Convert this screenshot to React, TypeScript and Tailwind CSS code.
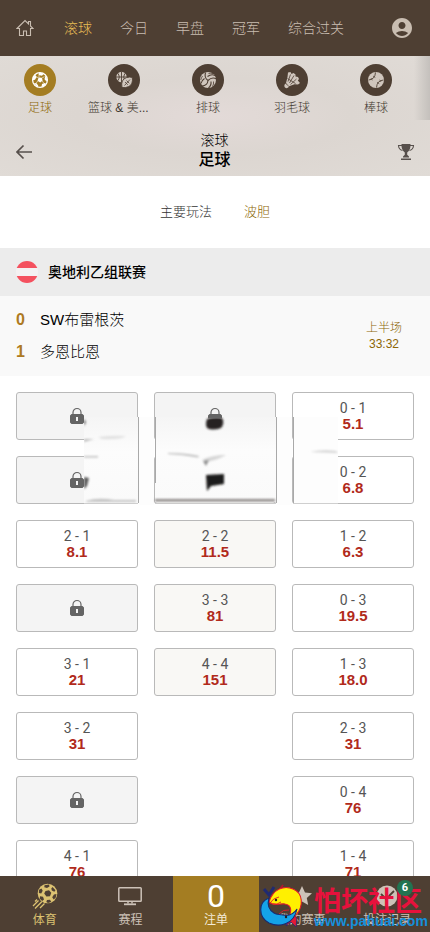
import type { ReactNode } from "react"
import { MdAccountCircle } from "react-icons/md"

type Odd = { score: string; price?: string }

const topTabs = ["滚球", "今日", "早盘", "冠军", "综合过关"]

const sports: { name: string; icon: ReactNode }[] = [
  { name: "足球", icon: <SoccerIcon /> },
  { name: "篮球 & 美...", icon: <BasketballIcon /> },
  { name: "排球", icon: <VolleyballIcon /> },
  { name: "羽毛球", icon: <ShuttlecockIcon /> },
  { name: "棒球", icon: <BaseballIcon /> },
]

const home: Odd[] = [
  { score: "1 - 0" },
  { score: "2 - 0" },
  { score: "2 - 1", price: "8.1" },
  { score: "3 - 0" },
  { score: "3 - 1", price: "21" },
  { score: "3 - 2", price: "31" },
  { score: "4 - 0" },
  { score: "4 - 1", price: "76" },
]

const draw: Odd[] = [
  { score: "0 - 0" },
  { score: "1 - 1" },
  { score: "2 - 2", price: "11.5" },
  { score: "3 - 3", price: "81" },
  { score: "4 - 4", price: "151" },
]

const away: Odd[] = [
  { score: "0 - 1", price: "5.1" },
  { score: "0 - 2", price: "6.8" },
  { score: "1 - 2", price: "6.3" },
  { score: "0 - 3", price: "19.5" },
  { score: "1 - 3", price: "18.0" },
  { score: "2 - 3", price: "31" },
  { score: "0 - 4", price: "76" },
  { score: "1 - 4", price: "71" },
]

function HomeIcon() {
  return (
    <svg viewBox="0 0 18 18" className="size-[18px]" fill="none" stroke="currentColor" strokeWidth="1.1">
      <path d="M1 9.5 9 1.5l3.5 3.5V2.5h2V7L17 9.5h-2.5v7h-4v-4.5h-3v4.5h-4v-7z" />
    </svg>
  )
}

function SoccerIcon() {
  return (
    <svg viewBox="0 0 18 18" className="size-[18px]">
      <circle cx="9" cy="9" r="7.4" fill="none" stroke="currentColor" strokeWidth="1.3" />
      <g fill="currentColor">
        <path d="m7.600 6.500 3.200.2.900 2.900-2.500 2-2.700-1.800zM8 1.500l5 1-2 2.300-3.300-.8zM2 6.500l2.300-2.700L5.600 6 4 8.800l-2.500.5zM14.300 4.500l2 4-.8 2-2-2.300zM2.800 12l2.700.3 1.700 2.200-.5 1.700zM11 13l2.700-1 1.300.7-2.500 2.800-2 .5z" />
      </g>
      <path d="m8 6.500 0-3M11 7l2.500-1.500M11.300 10l1.300 2M6.700 10 5 12.500M7.400 6.700 5 5.800" stroke="currentColor" strokeWidth="0.6" />
    </svg>
  )
}

function BasketballIcon() {
  return (
    <svg viewBox="0 0 18 18" className="size-[18px]">
      <circle cx="6.500" cy="6" r="5.200" fill="currentColor" />
      <path d="M1 6h11M6.500.5v11M2.500 2q3.500 4 0 8M10.500 2q-3.500 4 0 8" fill="none" stroke="#4e3f33" strokeWidth="0.9" />
      <path
        d="M7 16.500Q5.500 8.500 11.500 6.600q3-.9 5.800-.2 1 7-3.600 9.200-3 1.500-6.700.9z"
        fill="currentColor"
        stroke="#4e3f33"
        strokeWidth="0.9"
      />
      <path d="m9.500 14.500 5.500-6M10 11l2.800 2.800M11.500 9.500l2.800 2.800" stroke="#4e3f33" strokeWidth="0.8" />
    </svg>
  )
}

function VolleyballIcon() {
  return (
    <svg viewBox="0 0 18 18" className="size-[18px]">
      <circle cx="9" cy="9" r="8" fill="currentColor" />
      <g fill="none" stroke="#4e3f33" strokeWidth="1.100">
        <path d="M9 9.500Q5 7 6.500 1.500M9 9.500q4-4 8.500-1.500M9 9.500q-.5 5-6 5.500" />
        <path d="M8.500 5.500q4-3 7.500-1M12 10.500q.5 4-2.500 6.500M5.500 7.500q-3 2-3.500 5" />
        <path d="M9.500 2.500q2.500-.8 4.500.2M14.500 10.500q.5 2.500-1 5M3.500 5q-1 1.500-1.800 4" strokeWidth="0.8" />
      </g>
    </svg>
  )
}

function ShuttlecockIcon() {
  return (
    <svg viewBox="0 0 18 18" className="size-[18px]">
      <path
        d="M3 12 4.500 6l.5-4.500 2.500-.5 1 2 2-1 2 1.500v2l2.500.5 1 2-1.200 1.500L17 12l-2 1.500-3.500-.3L6 15.200z"
        fill="currentColor"
      />
      <path d="m5 10.500 2.500-7M6.500 12 11 4.500M7.500 13.500l6-5.500M4.500 7.500l8 5" stroke="#4e3f33" strokeWidth="0.8" />
      <path d="M2.300 12.500 6 15.800q-2 2.300-4 .8-1.500-2 .3-4.100z" fill="currentColor" />
    </svg>
  )
}

function BaseballIcon() {
  return (
    <svg viewBox="0 0 18 18" className="size-[18px]">
      <circle cx="9" cy="9" r="8" fill="currentColor" />
      <g fill="none" stroke="#4e3f33" strokeWidth="0.9">
        <path d="M1.500 9Q8 8.500 8.500 1.500M9.500 16.500Q10 9.500 16.500 9" />
        <path d="m4 7 1.300 2.300M6 5l2.300 1.500M10 11.300l2.300 1.500M12.700 8.700 14 11" strokeWidth="0.7" />
      </g>
    </svg>
  )
}

function TrophyIcon() {
  return (
    <svg viewBox="0 0 18 18" className="size-[18px]">
      <path d="M4.500 1h9q.3 6-3.300 8.500v2.300l1.800 1.700v1H6v-1l1.800-1.700V9.500Q4.200 7 4.500 1zM4 15.500h10V17H4z" fill="currentColor" />
      <path d="M5 2.500H1.500q.2 4 4 5M13 2.500h3.500q-.2 4-4 5" fill="none" stroke="currentColor" strokeWidth="1.1" />
    </svg>
  )
}

function LockIcon() {
  return (
    <svg viewBox="0 0 14 18" className="h-[18px] w-3.5 text-[#646464]">
      <path d="M3 8V5.500a4 4 0 0 1 8 0V8" fill="none" stroke="currentColor" strokeWidth="1.2" />
      <path
        fill="currentColor"
        fillRule="evenodd"
        d="M1.500 7h11L14 8.500v7L12.500 17h-11L0 15.500v-7zM6 10v4h2v-4z"
      />
    </svg>
  )
}

function KickedBallIcon() {
  return (
    <svg viewBox="0 0 26 26" className="size-[26px]">
      <circle cx="15.500" cy="10.500" r="9.800" fill="currentColor" />
      <g fill="#4e3f33">
        <path d="m13.500 8 3.500-.8 2.300 2.500-1.300 3.500-3.600.3-2.200-3zM12.500 2.200l4.500-.8.500 2-2.500 1.700-2.700-.8zM20.500 4l3 3.200-1.200 1.600-2.500-1.300-.5-2zM7 6.800 9.500 5.500l1.200 2.200-1.500 2.800-2.300-.5zM22 11.500l2.500-.5-.8 3.800-2 1.700-1.500-2.200zM8 13.300l3 .4 1 2.800-1.800 1.500-2.400-2.200zM15 17l3-.3 1.300 2.300-3.300.9-1.700-1z" />
      </g>
      <path d="M6.500 17.500 1 23M10 18.500 3 25.500M12.500 20.500 8 25M5 16.500l-2 2" stroke="currentColor" strokeWidth="1.3" />
    </svg>
  )
}

function ScreenIcon() {
  return (
    <svg viewBox="0 0 24 20" className="h-5 w-6" fill="none" stroke="currentColor" strokeWidth="1.5">
      <rect x="0.8" y="1.7" width="22.4" height="13.6" rx="0.8" />
      <path d="M10 15.500v2M14 15.500v2" />
      <path d="M6 18.300h12" strokeWidth="1.8" />
    </svg>
  )
}

function FlagIcon() {
  return (
    <span className="flex size-[22px] flex-col overflow-hidden rounded-full bg-[#f4f1f2]">
      <span className="h-[7px] bg-[#f4515f]" />
      <span className="mt-2 h-[7px] bg-[#f4515f]" />
    </span>
  )
}

function OddButton({ odd, tint }: { odd: Odd; tint?: boolean }) {
  const bg = !odd.price ? "bg-[#f4f4f4]" : tint ? "bg-[#f9f8f5]" : "bg-white"
  return (
    <button
      type="button"
      aria-label={odd.score}
      className={`flex h-12 w-full flex-col items-center justify-center rounded-[3px] border border-[#b9b9b9] ${bg}`}
    >
      {odd.price ? (
        <>
          <span className="text-sm leading-4 text-[#555]">{odd.score}</span>
          <span className="font-['Liberation_Sans'] text-[15px] leading-4 font-bold text-[#b12a1b]">{odd.price}</span>
        </>
      ) : (
        <LockIcon />
      )}
    </button>
  )
}

/* Faded smear lying over the first two rows of odds */
function Smear() {
  return (
    <svg viewBox="0 0 254 88" className="pointer-events-none absolute top-[41px] left-[84px] h-[88px] w-[254px]">
      <defs>
        <filter id="soft" x="-20%" y="-20%" width="140%" height="140%">
          <feGaussianBlur stdDeviation="0.9" />
        </filter>
        <linearGradient id="fade" x1="0" y1="0" x2="0" y2="1">
          <stop offset="0" stopColor="#f5f5f5" />
          <stop offset="0.4" stopColor="#fcfcfc" />
          <stop offset="1" stopColor="#fafafa" />
        </linearGradient>
      </defs>
      <rect width="54" height="87" fill="url(#fade)" />
      <rect x="55" width="15" height="88" fill="#fdfdfd" />
      <rect x="71" width="121" height="85" fill="url(#fade)" />
      <rect x="193" width="15" height="88" fill="#fdfdfd" />
      <rect x="209" width="45" height="86" fill="#fdfdfd" />
      <path d="M54.500 0v86M71.500 0v66M192.500 0v86M209.500 0v86" stroke="#a9a9a9" />
      <path d="M0 86.500h54M71 86.500h121M209 86.500h45" stroke="#cfcfcf" />
      <g filter="url(#soft)">
        <path d="M0 22h10l-10 3zM0 39h14v1.500H0z" fill="#bdbdbd" />
        <path d="M14 20q14-2 28-1-6 4-24 3z" fill="#e2e2e2" />
        <path d="M0 2l2 3-2 4zM0 60l5 1-2 8-3 3z" fill="#5c5c5c" />
        <path d="M2 84q12-4 28-1l22 0v2H2z" fill="#c4c4c4" />
        <path d="M71 82h120v2.500H71z" fill="#8b8685" />
        <path d="M84 36q18 0 31 3l-1 1.500q-14-3-30-3.500z" fill="#bcbcbc" />
        <path d="M118 43q10-5 24-5-8 5-20 7z" fill="#d6d6d6" />
        <path d="M119 44l6-1-3 6z" fill="#8d8d8d" />
        <path d="M123 2q8-3 15-1 3 5-1 10-9 3-14 0-2-4 0-9z" fill="#252321" />
        <path d="M122 58l18-1v10l-13 2-4 5z" fill="#1d1c1a" />
        <path d="M226 35q12-3 26-1l2 2z" fill="#d4d4d4" />
      </g>
      <path d="M124 0h14v1.500h-14z" fill="#666" />
    </svg>
  )
}

function Watermark() {
  return (
    <div className="pointer-events-none absolute inset-y-0 right-0 w-[172px]">
      <svg viewBox="0 0 48 52" className="absolute top-1 left-0 h-[52px] w-12">
        <path d="M6 9l5 6 5-8" fill="none" stroke="#202a72" strokeWidth="3" />
        <path d="M25 5l-5 7" stroke="#b3162f" strokeWidth="2" />
        <path d="M32 32l7 6-1 9-5-5-5 4 3-8z" fill="#e31935" stroke="#222b74" strokeWidth="0.8" />
        <path
          d="M11 22C15 9 26 5 35 9c10 4 11 17 3 26-3 4-6 4-8 3 4-6 4-13-3-14-6-1-10 3-16-2z"
          fill="#fff000"
          stroke="#e11b2b"
          strokeWidth="1.1"
        />
        <path
          d="M11 18C0 22 0 37 11 43c11 5 25 1 28-14-4 6-9 7-14 6-4-1-6 0-9-2-5-3-7-8-5-15z"
          fill="#14a3e8"
          stroke="#182b70"
          strokeWidth="1.1"
        />
        <path d="M12 23q3-5 9-6M15 24q4 1 8-2M31 30q-6-1-10 4" fill="none" stroke="#e11b2b" strokeWidth="0.9" />
        <circle cx="18" cy="20" r="1.200" fill="#222" />
        <circle cx="28" cy="37" r="1.200" fill="#222" />
      </svg>
      <span className="absolute top-2 left-14 font-['Noto_Sans_CJK_SC',sans-serif] text-[27px] leading-8 font-bold whitespace-nowrap text-[#e7113c]">
        怕坏社区
      </span>
      <span className="absolute top-[37px] left-14 font-['Liberation_Sans',sans-serif] text-sm leading-4 font-bold whitespace-nowrap text-[#1590dc]">
        www.pahuai.com
      </span>
    </div>
  )
}

export default function App() {
  return (
    <div className="flex h-screen flex-col overflow-hidden bg-white font-[Roboto,'Noto_Sans_CJK_SC',sans-serif] text-black">
      <header className="flex h-14 shrink-0 items-center bg-[#4e3f33] px-4 text-[#c9bdb1]">
        <a href="#home" aria-label="首页" className="mr-[30px]">
          <HomeIcon />
        </a>
        <nav className="flex flex-1 gap-7 text-sm font-light">
          {topTabs.map((tab, i) => (
            <a key={tab} href="#tab" className={i === 0 ? "text-[#e6bd55]" : ""}>
              {tab}
            </a>
          ))}
        </nav>
        <button type="button" aria-label="账户">
          <MdAccountCircle className="size-6" />
        </button>
      </header>

      <section className="relative shrink-0 bg-[radial-gradient(ellipse_at_center,#e3dad8_0%,#dcd6d1_45%,#e0dbd6_100%)]">
        <div className="absolute top-0 right-0 h-16 w-4 bg-linear-to-r from-transparent to-[#c4c0bc]" />
        <nav className="flex h-16 gap-3 overflow-hidden pt-2 pl-1">
          {sports.map((sport, i) => (
            <a key={sport.name} href="#sport" className="flex w-[72px] shrink-0 flex-col items-center">
              <span
                className={`flex size-8 items-center justify-center rounded-full ${
                  i === 0 ? "bg-[#a47d22] text-white" : "bg-[#4e3f33] text-[#d0c6bd]"
                }`}
              >
                {sport.icon}
              </span>
              <span
                className={`mt-0.5 w-full font-['Liberation_Sans','Noto_Sans_CJK_SC',sans-serif] text-xs leading-5 font-light whitespace-nowrap ${
                  i === 0 ? "text-[#8c6605]" : "text-[#41372f]"
                } ${i === 1 ? "text-left" : "text-center"}`}
              >
                {sport.name}
              </span>
            </a>
          ))}
        </nav>
        <div className="flex h-14 items-center justify-between px-4 pt-2">
          <button type="button" aria-label="返回" className="text-[#57504c]">
            <svg viewBox="0 0 16 16" className="size-4" fill="none" stroke="currentColor" strokeWidth="1.7">
              <path d="M16 8H1M7.500 1.500 1 8l6.500 6.500" />
            </svg>
          </button>
          <h1 className="-mt-1 text-center">
            <span className="block text-sm leading-5 font-light">滚球</span>
            <span className="block text-base leading-5 font-medium">足球</span>
          </h1>
          <button type="button" aria-label="奖杯" className="-mr-px text-[#57504c]">
            <TrophyIcon />
          </button>
        </div>
      </section>

      <nav className="flex h-[72px] shrink-0 items-center justify-center gap-8 text-[13px] font-light">
        <a href="#main" className="text-[#333]">
          主要玩法
        </a>
        <a href="#score" className="text-[#8c6605]">
          波胆
        </a>
      </nav>

      <div className="flex h-12 shrink-0 items-center gap-2.5 bg-[#ececec] px-4">
        <FlagIcon />
        <h2 className="text-sm font-medium">奥地利乙组联赛</h2>
      </div>

      <div className="flex h-20 shrink-0 items-center justify-between bg-[#f9f9f9] px-4">
        <div className="flex flex-col gap-2">
          {[
            ["0", "SW布雷根茨"],
            ["1", "多恩比恩"],
          ].map(([goals, team]) => (
            <div key={team} className="flex items-center font-['Liberation_Sans','Noto_Sans_CJK_SC',sans-serif] leading-6">
              <span className="w-6 text-base font-bold text-[#ae7a22]">{goals}</span>
              <span className="text-[15px] font-light">{team}</span>
            </div>
          ))}
        </div>
        <div className="w-[60px] text-center font-['Liberation_Sans','Noto_Sans_CJK_SC',sans-serif] text-xs leading-4 font-light text-[#8c6605]">
          <div>上半场</div>
          <div>33:32</div>
        </div>
      </div>

      <main className="relative min-h-0 flex-1 overflow-hidden p-4">
        <div className="grid grid-cols-3 items-start gap-4">
          {[home, draw, away].map((column, i) => (
            <div key={i} className="flex flex-col gap-4">
              {column.map((odd) => (
                <OddButton key={odd.score} odd={odd} tint={i === 1} />
              ))}
            </div>
          ))}
        </div>
        <Smear />
      </main>

      <footer className="relative shrink-0 bg-[#4e3f33] text-xs text-[#cdc2b8]">
        <nav className="grid h-14 grid-cols-5 pl-0.5">
          <a href="#sports" className="flex flex-col items-center pt-1.5 text-[#dcc272]">
            <span className="flex h-7 items-center">
              <KickedBallIcon />
            </span>
            <span className="leading-5">体育</span>
          </a>
          <a href="#schedule" className="flex flex-col items-center pt-1.5">
            <span className="flex h-7 items-center">
              <ScreenIcon />
            </span>
            <span className="leading-5">赛程</span>
          </a>
          <a href="#slip" className="flex flex-col items-center bg-[#a47d22] pt-1.5 text-[#f3ead7]">
            <span className="h-7 text-[32px] leading-7 text-white">0</span>
            <span className="leading-5">注单</span>
          </a>
          <a href="#mine" className="flex flex-col items-center pt-1.5">
            <span className="flex h-7 items-center">
              <svg viewBox="0 0 22 22" className="size-[22px]" fill="currentColor">
                <path d="m11 1 3 6.500 7 .8-5.200 4.800 1.400 7L11 16.600 4.800 20.100l1.400-7L1 8.300l7-.8z" />
              </svg>
            </span>
            <span className="leading-5">我的赛事</span>
          </a>
          <a href="#history" className="flex flex-col items-center pt-1.5">
            <span className="flex h-7 items-center">
              <svg viewBox="0 0 22 22" className="size-[22px]">
                <circle cx="11" cy="11" r="10.500" fill="currentColor" />
                <path d="m5 9 5 5 8-8" fill="none" stroke="#4e3f33" strokeWidth="1.800" />
              </svg>
            </span>
            <span className="leading-5">投注记录</span>
          </a>
        </nav>
        <Watermark />
        <span className="absolute top-1 right-[17px] flex size-4 items-center justify-center rounded-full bg-[#217451] text-[11px] font-bold text-white">
          6
        </span>
      </footer>
    </div>
  )
}
